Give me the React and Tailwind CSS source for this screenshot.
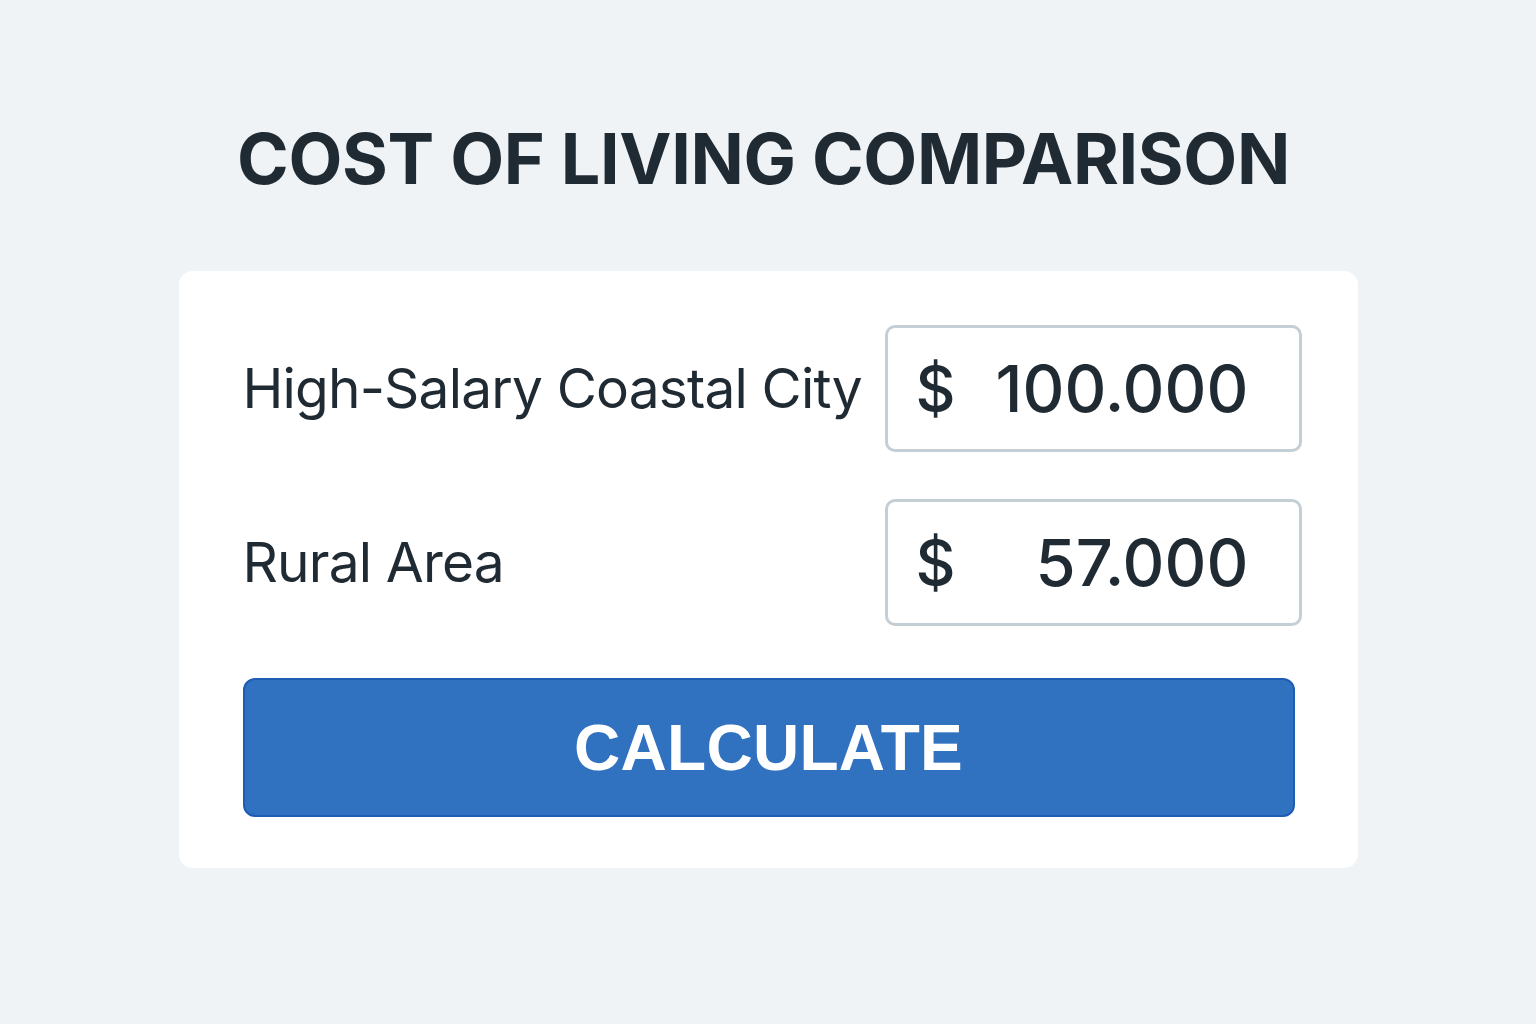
export default function App() {
  const rows = [
    { label: "High-Salary Coastal City", value: "100.000" },
    { label: "Rural Area", value: "57.000" },
  ];
  return (
    <div className="min-h-screen w-full bg-[#eff3f6] flex flex-col items-center" style={{ fontFamily: "Inter, 'Noto Sans', sans-serif" }}>
      <h1 className="mt-[119px] text-[70px] leading-[80px] font-bold tracking-[-0.005em] text-[#1f2a33] pr-[9px] whitespace-nowrap">
        COST OF LIVING COMPARISON
      </h1>
      <div className="mt-[72px] w-[1179px] h-[597px] bg-white rounded-[14px] pl-[64px] pr-[56px] pt-[54px]">
        <div className="flex flex-col gap-[47px]">
          {rows.map((r) => (
            <div key={r.label} className="flex items-center justify-between">
              <span className="text-[55px] text-[#1f2a33] tracking-[-0.015em] whitespace-nowrap">{r.label}</span>
              <div className="shrink-0 w-[417px] h-[127px] border-[3px] border-[#c4ced5] rounded-[10px] flex items-center pl-[28px] pr-[50px] text-[#1f2a33]">
                <span className="text-[62px] font-medium">$</span>
                <span className="flex-1 text-right text-[65px] font-medium">{r.value}</span>
              </div>
            </div>
          ))}
        </div>
        <button className="mt-[52px] w-[1052px] h-[139px] bg-[#3071c0] border-[2px] border-[#1f5db5] rounded-[12px] text-white text-[64px] font-bold tracking-[0.005em] flex items-center justify-center" style={{ fontFamily: "'Liberation Sans', Arial, sans-serif" }}>
          CALCULATE
        </button>
      </div>
    </div>
  );
}
